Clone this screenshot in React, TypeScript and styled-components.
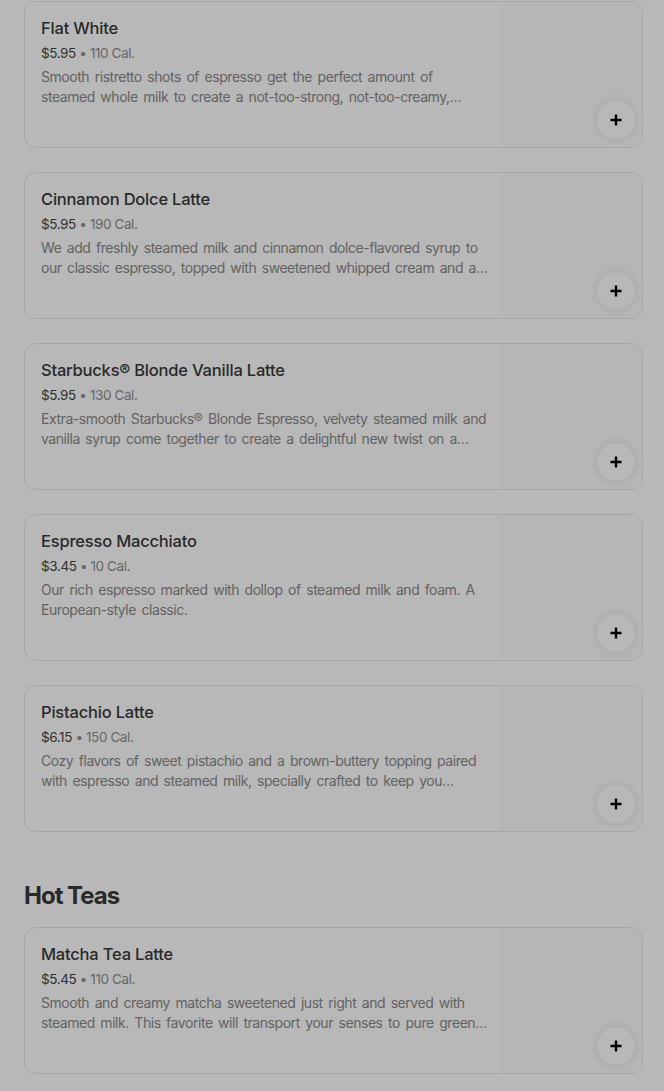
import React from "react";
import styled, { createGlobalStyle } from "styled-components";

const Global = createGlobalStyle`
  html, body { margin: 0; padding: 0; background: #ffffff; }
  body { font-family: Inter, "Noto Sans", sans-serif; -webkit-font-smoothing: antialiased; }
  * { box-sizing: border-box; }
`;

const Page = styled.main`
  padding: 1px 21px 16px 24px;
  display: flex;
  flex-direction: column;
`;

const Section = styled.section`
  display: flex;
  flex-direction: column;
  gap: 24px;
`;

const SectionTitle = styled.h2`
  margin: 48px 0 15px;
  font-size: 24px;
  line-height: 32px;
  font-weight: 700;
  letter-spacing: -1px;
  color: #3a3a3a;
`;

const Card = styled.article`
  position: relative;
  display: flex;
  height: 147px;
  border: 1px solid #e8e8e8;
  border-radius: 12px;
  background: #ffffff;
  overflow: hidden;
`;

const Info = styled.div`
  flex: 1;
  min-width: 0;
  padding: 16px 8px 0 16px;
  display: flex;
  flex-direction: column;
`;

const Name = styled.h3`
  margin: 0;
  font-size: 16.5px;
  line-height: 20px;
  font-weight: 500;
  color: #3a3a3a;
  letter-spacing: -0.2px;
`;

const Meta = styled.div`
  margin-top: 5px;
  font-size: 13.5px;
  line-height: 20px;
  color: #444;
  letter-spacing: -0.4px;
`;

const Cal = styled.span`
  color: #8f8f8f;
`;

const Desc = styled.p`
  margin: 4px 0 0;
  max-width: 449px;
  font-size: 14px;
  line-height: 20px;
  color: #8a8a8a;
  letter-spacing: -0.45px;
  word-spacing: 2px;
  display: -webkit-box;
  -webkit-line-clamp: 2;
  -webkit-box-orient: vertical;
  overflow: hidden;
`;

const Thumb = styled.div`
  width: 141px;
  flex: none;
  background: #fcfcfc;
  border-left: 1px solid #f7f7f7;
`;

const AddButton = styled.button`
  position: absolute;
  right: 7px;
  bottom: 8px;
  width: 38px;
  height: 38px;
  border-radius: 50%;
  border: none;
  background: #ffffff;
  box-shadow: 0 0 8px rgba(0, 0, 0, 0.1);
  display: flex;
  align-items: center;
  justify-content: center;
  padding: 0;
`;

const Backdrop = styled.div`
  position: fixed;
  inset: 0;
  background: rgba(0, 0, 0, 0.28);
  pointer-events: none;
`;

type Item = { name: string; price: string; cal: string; desc: string };

const coffee: Item[] = [
  {
    name: "Flat White",
    price: "$5.95",
    cal: "110 Cal.",
    desc: "Smooth ristretto shots of espresso get the perfect amount of steamed whole milk to create a not-too-strong, not-too-creamy,…",
  },
  {
    name: "Cinnamon Dolce Latte",
    price: "$5.95",
    cal: "190 Cal.",
    desc: "We add freshly steamed milk and cinnamon dolce-flavored syrup to our classic espresso, topped with sweetened whipped cream and a…",
  },
  {
    name: "Starbucks® Blonde Vanilla Latte",
    price: "$5.95",
    cal: "130 Cal.",
    desc: "Extra-smooth Starbucks® Blonde Espresso, velvety steamed milk and vanilla syrup come together to create a delightful new twist on a…",
  },
  {
    name: "Espresso Macchiato",
    price: "$3.45",
    cal: "10 Cal.",
    desc: "Our rich espresso marked with dollop of steamed milk and foam. A European-style classic.",
  },
  {
    name: "Pistachio Latte",
    price: "$6.15",
    cal: "150 Cal.",
    desc: "Cozy flavors of sweet pistachio and a brown-buttery topping paired with espresso and steamed milk, specially crafted to keep you…",
  },
];

const teas: Item[] = [
  {
    name: "Matcha Tea Latte",
    price: "$5.45",
    cal: "110 Cal.",
    desc: "Smooth and creamy matcha sweetened just right and served with steamed milk. This favorite will transport your senses to pure green…",
  },
];

const PlusIcon = () => (
  <svg width="14" height="14" viewBox="0 0 14 14" aria-hidden="true">
    <path d="M7 1.5v11M1.5 7h11" stroke="#000" strokeWidth="2.4" fill="none" />
  </svg>
);

const ItemCard = ({ item }: { item: Item }) => (
  <Card>
    <Info>
      <Name>{item.name}</Name>
      <Meta>
        {item.price} <Cal>• {item.cal}</Cal>
      </Meta>
      <Desc>{item.desc}</Desc>
    </Info>
    <Thumb />
    <AddButton aria-label={`Add ${item.name}`}>
      <PlusIcon />
    </AddButton>
  </Card>
);

export default function App() {
  return (
    <>
      <Global />
      <Page>
        <Section>
          {coffee.map((c) => (
            <ItemCard key={c.name} item={c} />
          ))}
        </Section>
        <SectionTitle>Hot Teas</SectionTitle>
        <Section>
          {teas.map((c) => (
            <ItemCard key={c.name} item={c} />
          ))}
        </Section>
      </Page>
      <Backdrop />
    </>
  );
}
